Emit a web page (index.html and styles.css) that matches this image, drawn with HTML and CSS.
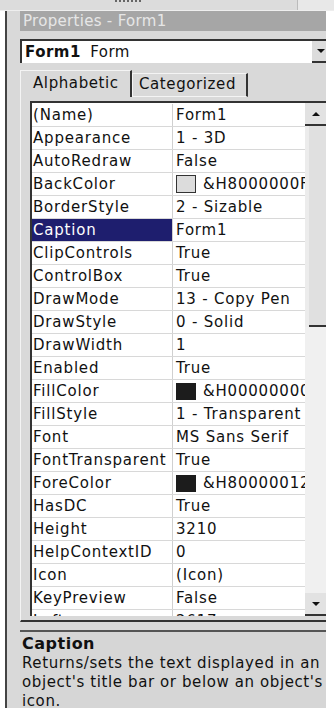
FILE: index.html
```html
<!DOCTYPE html>
<html lang="en">

<head>
    <meta charset="UTF-8">
    <meta name="viewport" content="width=device-width, initial-scale=1.0">
    <title>Properties - Form1</title>
    <link rel="stylesheet" href="styles.css">
</head>

<body>
    <div class="top-strip">
        <span class="grip"></span>
        <span class="top-right"></span>
    </div>
    <div class="window">
        <div class="title-bar">
            <span class="title-text">Properties - Form1</span>
            <span class="title-btn"></span>
        </div>

        <div class="combo">
            <span class="combo-text"><b>Form1</b> Form</span>
            <span class="combo-btn">
                <svg width="10" height="6" viewBox="0 0 10 6"><path d="M1 1h8L5 5z" fill="#111"/></svg>
            </span>
        </div>

        <div class="tabs">
            <div class="tab active">Alphabetic</div>
            <div class="tab">Categorized</div>
        </div>

        <div class="tab-page">
            <div class="grid">
                <div class="rows">
                    <div class="row"><span class="name">(Name)</span><span class="value">Form1</span></div>
                    <div class="row"><span class="name">Appearance</span><span class="value">1 - 3D</span></div>
                    <div class="row"><span class="name">AutoRedraw</span><span class="value">False</span></div>
                    <div class="row"><span class="name">BackColor</span><span class="value"><i class="swatch light"></i>&amp;H8000000F&amp;</span></div>
                    <div class="row"><span class="name">BorderStyle</span><span class="value">2 - Sizable</span></div>
                    <div class="row selected"><span class="name">Caption</span><span class="value">Form1</span></div>
                    <div class="row"><span class="name">ClipControls</span><span class="value">True</span></div>
                    <div class="row"><span class="name">ControlBox</span><span class="value">True</span></div>
                    <div class="row"><span class="name">DrawMode</span><span class="value">13 - Copy Pen</span></div>
                    <div class="row"><span class="name">DrawStyle</span><span class="value">0 - Solid</span></div>
                    <div class="row"><span class="name">DrawWidth</span><span class="value">1</span></div>
                    <div class="row"><span class="name">Enabled</span><span class="value">True</span></div>
                    <div class="row"><span class="name">FillColor</span><span class="value"><i class="swatch dark"></i>&amp;H00000000&amp;</span></div>
                    <div class="row"><span class="name">FillStyle</span><span class="value">1 - Transparent</span></div>
                    <div class="row"><span class="name">Font</span><span class="value">MS Sans Serif</span></div>
                    <div class="row"><span class="name">FontTransparent</span><span class="value">True</span></div>
                    <div class="row"><span class="name">ForeColor</span><span class="value"><i class="swatch dark"></i>&amp;H80000012&amp;</span></div>
                    <div class="row"><span class="name">HasDC</span><span class="value">True</span></div>
                    <div class="row"><span class="name">Height</span><span class="value">3210</span></div>
                    <div class="row"><span class="name">HelpContextID</span><span class="value">0</span></div>
                    <div class="row"><span class="name">Icon</span><span class="value">(Icon)</span></div>
                    <div class="row"><span class="name">KeyPreview</span><span class="value">False</span></div>
                    <div class="row"><span class="name">Left</span><span class="value">2617</span></div>
                </div>
                <div class="scrollbar">
                    <div class="sb-btn">
                        <svg width="10" height="6" viewBox="0 0 10 6"><path d="M1 5h8L5 1z" fill="#111"/></svg>
                    </div>
                    <div class="sb-thumb"></div>
                    <div class="sb-track"></div>
                    <div class="sb-btn">
                        <svg width="10" height="6" viewBox="0 0 10 6"><path d="M1 1h8L5 5z" fill="#111"/></svg>
                    </div>
                </div>
            </div>
        </div>

        <div class="desc">
            <div class="desc-title">Caption</div>
            <div class="desc-text">Returns/sets the text displayed in an<br>object's title bar or below an object's<br>icon.</div>
        </div>
    </div>
</body>

</html>
```

FILE: styles.css
```css
body {
    margin: 0;
    padding: 0;
    width: 334px;
    height: 708px;
    overflow: hidden;
    background-color: #ffffff;
    font-family: "DejaVu Sans", Verdana, sans-serif;
    font-size: 15px;
    color: #111;
}

.top-strip {
    height: 10px;
    display: flex;
    background-color: #dcdcdc;
    border-bottom: 1px solid #eeeeee;
}

.grip {
    margin-left: 115px;
    width: 26px;
    height: 2px;
    border-top: 2px dotted #666;
}

.top-right {
    margin-left: auto;
    width: 36px;
    border-left: 1px solid #bbbbbb;
    background-color: #e8e8e8;
}

.window {
    margin-left: 5px;
    width: 306px;
    height: 697px;
    border-left: 2px solid #444;
    background-color: #d9d9d9;
    padding-left: 13px;
    overflow: hidden;
}

.title-bar {
    height: 20px;
    width: 310px;
    background-color: #a6a6a6;
    display: flex;
    align-items: center;
}

.title-text {
    color: #e6e6e6;
    padding-left: 3px;
    letter-spacing: 0.3px;
}

.title-btn {
    margin-left: auto;
    width: 2px;
    height: 12px;
    border-left: 2px dotted #333;
}

.combo {
    margin-top: 8px;
    height: 24px;
    width: 310px;
    box-sizing: border-box;
    background-color: #fff;
    border-top: 2px solid #333;
    border-left: 2px solid #333;
    display: flex;
    align-items: center;
}

.combo-text {
    padding-left: 3px;
    letter-spacing: 0.5px;
}

.combo-text b {
    margin-right: 4px;
}

.combo-btn {
    margin-left: auto;
    width: 18px;
    height: 20px;
    background-color: #dcdcdc;
    border-bottom: 2px solid #333;
    display: flex;
    justify-content: center;
    align-items: center;
}

.tabs {
    margin-top: 7px;
    height: 27px;
    display: flex;
    align-items: flex-end;
}

.tab {
    box-sizing: border-box;
    letter-spacing: 0.6px;
    border-right: 2px solid #333;
    border-left: 1px solid #f4f4f4;
    border-top: 1px solid #f4f4f4;
}

.tab.active {
    height: 27px;
    width: 112px;
    padding: 3px 0 0 12px;
}

.tab:not(.active) {
    height: 24px;
    width: 116px;
    padding: 1px 0 0 6px;
    border-bottom: 1px solid #f4f4f4;
}

.tab-page {
    height: 525px;
    border-left: 1px solid #f4f4f4;
    padding: 4px 0 0 9px;
    box-sizing: border-box;
    border-bottom: 2px solid #333;
}

.grid {
    height: 515px;
    width: 300px;
    box-sizing: border-box;
    border-top: 2px solid #333;
    border-left: 2px solid #333;
    background-color: #fff;
    display: flex;
    overflow: hidden;
}

.rows {
    width: 273px;
    flex: none;
    padding-top: 1px;
}

.row {
    height: 23px;
    display: flex;
    border-bottom: 1px solid #d8d8d8;
    box-sizing: border-box;
    letter-spacing: 0.8px;
    white-space: nowrap;
}

.name {
    width: 139px;
    flex: none;
    padding-left: 1px;
    border-right: 1px solid #d0d0d0;
    line-height: 22px;
    overflow: hidden;
}

.row.selected .name {
    background-color: #1e1e6e;
    color: #fff;
}

.value {
    padding-left: 3px;
    line-height: 22px;
    overflow: hidden;
    display: flex;
    align-items: center;
}

.swatch {
    display: inline-block;
    width: 16px;
    height: 13px;
    margin-right: 7px;
    flex: none;
}

.swatch.light {
    background-color: #dcdcdc;
    border: 1px solid #333;
    width: 18px;
    height: 16px;
}

.swatch.dark {
    background-color: #1c1c1c;
    border: 2px solid #1c1c1c;
}

.scrollbar {
    width: 22px;
    flex: none;
    display: flex;
    flex-direction: column;
    background-color: #ececec;
}

.sb-btn {
    height: 23px;
    flex: none;
    box-sizing: border-box;
    border-bottom: 2px solid #333;
    background-color: #e2e2e2;
    display: flex;
    justify-content: center;
    align-items: center;
}

.sb-thumb {
    height: 199px;
    margin-left: 4px;
    flex: none;
    background-color: #e0e0e0;
    border-bottom: 2px solid #333;
}

.sb-track {
    flex: 1;
    background-color: #f0f0f0;
}

.desc {
    margin-top: 8px;
    height: 80px;
    width: 330px;
    border-top: 2px solid #555;
    background-color: #d6d6d6;
    padding-left: 2px;
    box-sizing: border-box;
    white-space: nowrap;
}

.desc-title {
    font-size: 16px;
    font-weight: bold;
    letter-spacing: 0.5px;
    line-height: 20px;
    padding-top: 2px;
}

.desc-text {
    line-height: 19px;
    letter-spacing: 0.6px;
}
```
